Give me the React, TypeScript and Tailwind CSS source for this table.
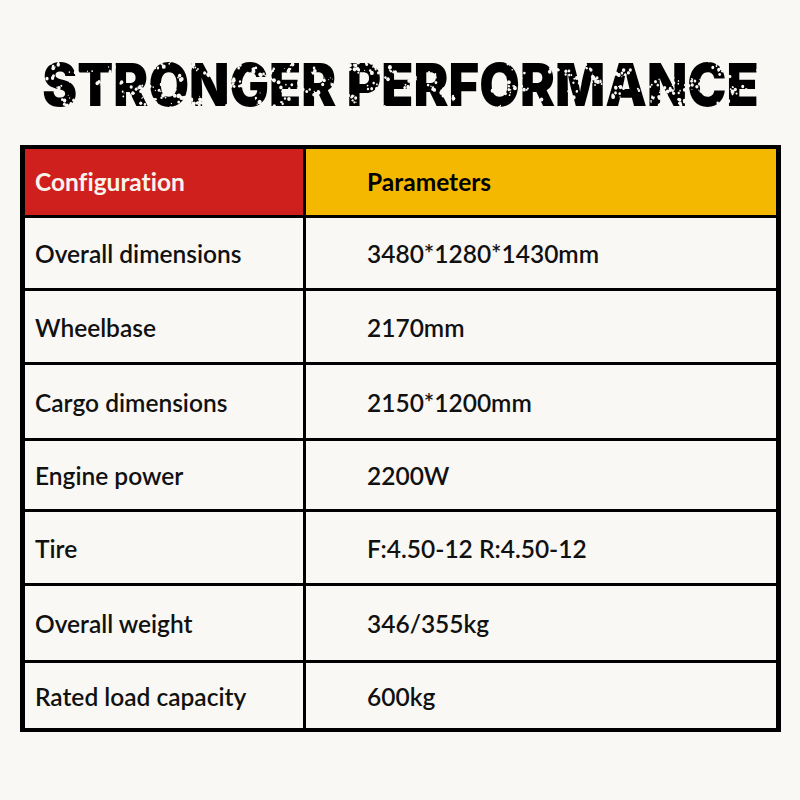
import { useMemo } from 'react'

const rows = [
  { label: 'Overall dimensions', value: '3480*1280*1430mm', h: 'h-[73px]' },
  { label: 'Wheelbase', value: '2170mm', h: 'h-[74px]' },
  { label: 'Cargo dimensions', value: '2150*1200mm', h: 'h-[76px]' },
  { label: 'Engine power', value: '2200W', h: 'h-[71px]' },
  { label: 'Tire', value: 'F:4.50-12 R:4.50-12', h: 'h-[74px]' },
  { label: 'Overall weight', value: '346/355kg', h: 'h-[77px]' },
  { label: 'Rated load capacity', value: '600kg', h: 'h-[65px]' },
]

// small seeded PRNG so the worn texture is the same on every render
function mulberry(seed: number) {
  let a = seed
  return () => {
    a |= 0
    a = (a + 0x6d2b79f5) | 0
    let t = Math.imul(a ^ (a >>> 15), 1 | a)
    t = (t + Math.imul(t ^ (t >>> 7), 61 | t)) ^ t
    return ((t ^ (t >>> 14)) >>> 0) / 4294967296
  }
}

function Speckles() {
  const dots = useMemo(() => {
    const rnd = mulberry(11)
    const out: { x: number; y: number; r: number }[] = []
    for (let c = 0; c < 150; c++) {
      const cx = rnd() * 800
      const cy = 10 + rnd() * 46
      const n = 2 + Math.floor(rnd() * 7)
      for (let i = 0; i < n; i++) {
        out.push({
          x: cx + (rnd() - 0.5) * 11,
          y: cy + (rnd() - 0.5) * 8,
          r: 0.5 + rnd() * 1.7,
        })
      }
    }
    return out
  }, [])
  return (
    <svg
      className="absolute inset-0 w-full h-full pointer-events-none"
      viewBox="0 0 800 64"
      preserveAspectRatio="none"
      aria-hidden
    >
      {dots.map((d, i) => (
        <circle key={i} cx={d.x} cy={d.y} r={d.r} fill="#f9f8f4" />
      ))}
    </svg>
  )
}

export default function App() {
  return (
    <div className="w-[800px] h-[800px] bg-[#f9f8f4] flex flex-col items-start font-['Lato',sans-serif] text-[#111] [font-variant-ligatures:none]">
      {/* title */}
      <div className="w-full flex justify-center pt-[53px] pl-[2px]">
        <div className="relative scale-x-[0.89]">
          <h1 className="font-['Inter',sans-serif] font-black text-[59px] leading-[64px] text-black whitespace-nowrap">
            STRONGER PERFORMANCE
          </h1>
          <Speckles />
        </div>
      </div>

      {/* spec table */}
      <div className="ml-[20px] mt-[28px] w-[761px] border-black border-l-[5px] border-r-[5px] border-t-4 border-b-4">
        <div className="flex h-[69px] border-b-[3px] border-black">
          <div className="w-[281px] border-r-[3px] border-black bg-[#d0201e] flex items-center pl-[10px] text-[24.5px] font-bold text-[#f8f3ec]">
            Configuration
          </div>
          <div className="flex-1 bg-[#f5b800] flex items-center pl-[61px] text-[24.5px] font-bold text-black">
            Parameters
          </div>
        </div>
        {rows.map((r, i) => (
          <div
            key={r.label}
            className={`flex ${r.h} ${i < rows.length - 1 ? 'border-b-[3px] border-black' : ''}`}
          >
            <div className="w-[281px] border-r-[3px] border-black flex items-center pl-[10px] pt-[3px] text-[24.5px] font-semibold">
              {r.label}
            </div>
            <div className="flex-1 flex items-center pl-[61px] pt-[3px] text-[24.5px] font-semibold">
              {r.value}
            </div>
          </div>
        ))}
      </div>
    </div>
  )
}
